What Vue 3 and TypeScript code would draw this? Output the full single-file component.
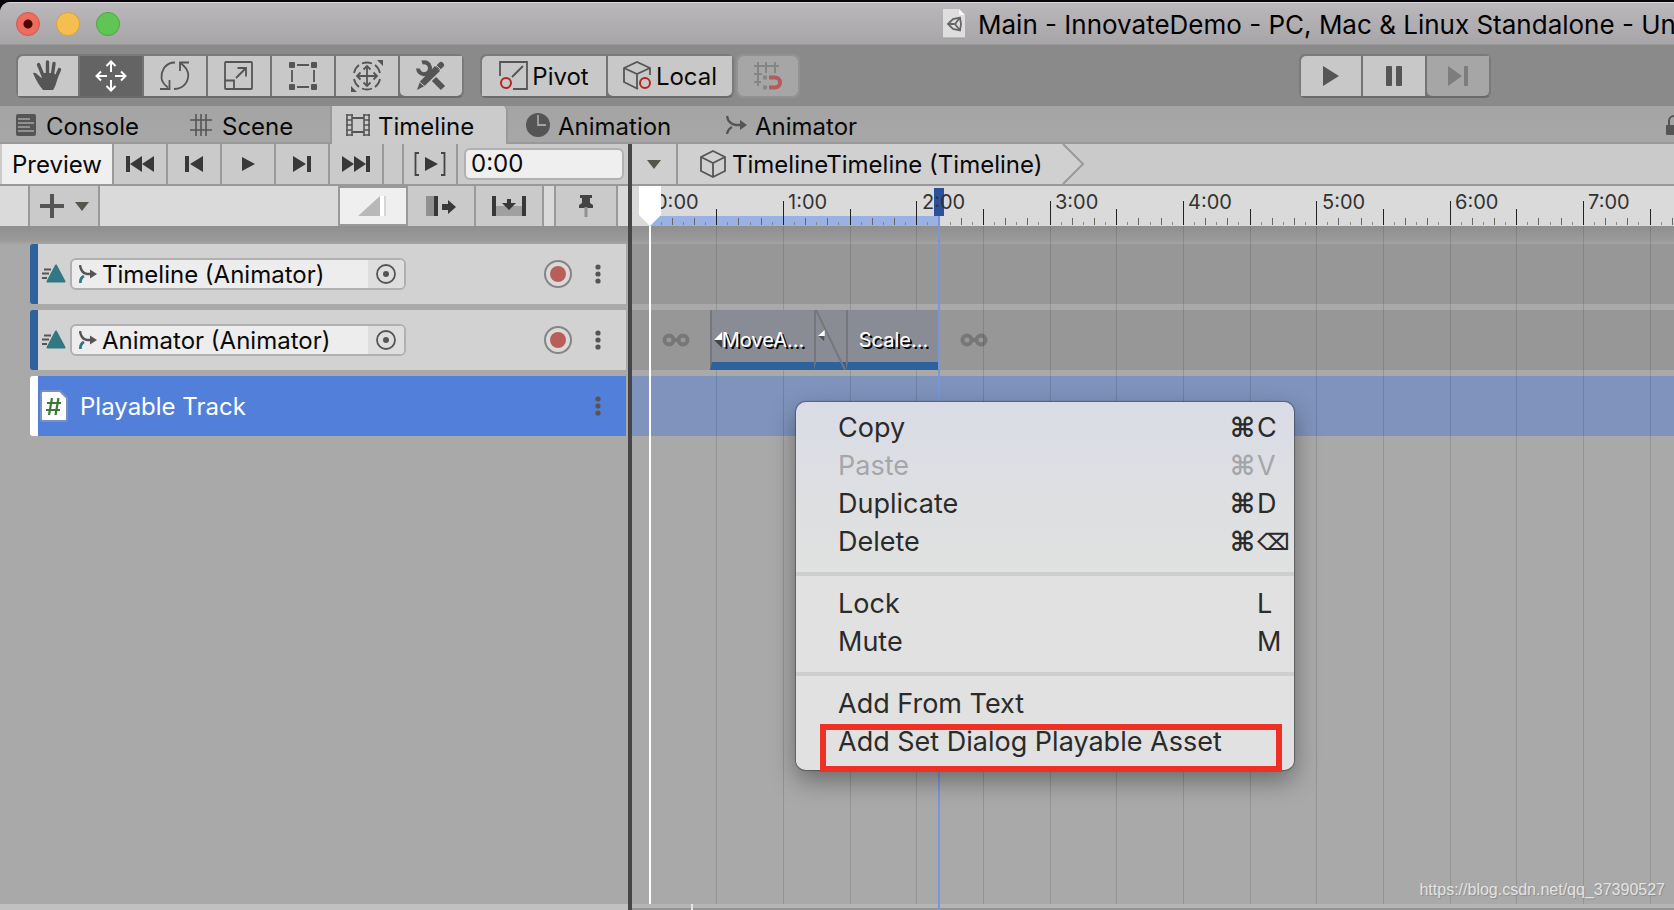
<script setup lang="ts">
import { ref } from 'vue'

interface Tick { x: number; size: 'major' | 'half' | 'medium' | 'small' }
interface MenuItem { label: string; mod?: string; keyName?: string; disabled?: boolean; marked?: boolean }

const ORIGIN = 18
const FRAMES_PER_SECOND = 60
const SECOND_WIDTH = 400 / 3

const frameX = (frame: number): number => Math.round(ORIGIN + (frame * SECOND_WIDTH) / FRAMES_PER_SECOND)

const ticks: Tick[] = []
for (let i = 1; i < 240; i++) {
  const size = i % 12 === 0 ? 'major' : i % 6 === 0 ? 'half' : i % 2 === 0 ? 'medium' : 'small'
  ticks.push({ x: Math.floor(ORIGIN + (i * SECOND_WIDTH) / 12), size })
}
const gridLines = ticks.filter((t) => t.size === 'major' || t.size === 'half')
const seconds = Array.from({ length: 8 }, (_, i) => ({ text: `${i}:00`, x: frameX(i * 60) }))

const END_FRAME = 130
const endX = frameX(END_FRAME)
const clips = [
  { name: 'MoveA...', from: 27, to: 74, arrow: true },
  { name: 'Scale...', from: 88, to: END_FRAME, arrow: false },
]
const clipStyle = (from: number, to: number) => ({
  left: `${frameX(from)}px`,
  width: `${frameX(to) - frameX(from)}px`,
})

const time = ref('0:00')
const bindings = ['Timeline (Animator)', 'Animator (Animator)']

const menu: MenuItem[][] = [
  [
    { label: 'Copy', mod: '⌘', keyName: 'C' },
    { label: 'Paste', mod: '⌘', keyName: 'V', disabled: true },
    { label: 'Duplicate', mod: '⌘', keyName: 'D' },
    { label: 'Delete', mod: '⌘', keyName: '⌫' },
  ],
  [
    { label: 'Lock', keyName: 'L' },
    { label: 'Mute', keyName: 'M' },
  ],
  [{ label: 'Add From Text' }, { label: 'Add Set Dialog Playable Asset', marked: true }],
]
</script>

<template>
  <div class="desktop">
    <div class="window">
      <header class="titlebar">
        <div class="lights">
          <button class="light red" aria-label="Close"></button>
          <button class="light yellow" aria-label="Minimize"></button>
          <button class="light green" aria-label="Zoom"></button>
        </div>
        <div class="title">
          <svg class="doc" width="22" height="30" viewBox="0 0 22 30">
            <path d="M0 0H16L22 6V29H0Z" fill="#dedede" />
            <path d="M16 0V6H22Z" fill="#f6f6f6" />
            <path d="M0 29H22" stroke="#999" />
            <path d="M5 15L10 10L17 8.500L18 15L17 21.500L10 20ZM5 15H12L17 8.500M12 15L17 21.500" fill="none" stroke="#666" stroke-width="1.800" />
          </svg>
          <span>Main - InnovateDemo - PC, Mac &amp; Linux Standalone - Unit</span>
        </div>
      </header>

      <div class="toolbar">
        <div class="group tools">
          <button aria-label="Hand">
            <svg width="30" height="32" viewBox="0 0 30 32">
              <path d="M5.500 4.500L11 18M14.500 2V17M21 3.500L19 18M26.500 9.500L22 20" stroke="#555" stroke-width="3.400" stroke-linecap="round" />
              <path d="M0 13Q2.500 12 5 15L8.500 18L10 13H20L25 16Q23 26 20 30H10Q4 23 0 13Z" fill="#555" />
            </svg>
          </button>
          <button class="on" aria-label="Move">
            <svg width="32" height="32" viewBox="0 0 32 32" fill="none" stroke="#fff" stroke-width="2">
              <path d="M16 12V2M11.500 6L16 1.500L20.500 6M16 20V30M11.500 26L16 30.500L20.500 26M12 16H2M6 11.500L1.500 16L6 20.500M20 16H30M26 11.500L30.500 16L26 20.500" />
            </svg>
          </button>
          <button aria-label="Rotate">
            <svg width="30" height="30" viewBox="0 0 30 30" fill="none" stroke="#555" stroke-width="1.800">
              <path d="M15 1.500Q8 1.500 4 7Q1 12 1.500 17Q2 22 8 26.500M0 28H9.500V19M14 28Q22 28 26 22Q29 17 28 12Q27 7 21 2.500M29 1.500H20V10" />
            </svg>
          </button>
          <button aria-label="Scale">
            <svg width="30" height="30" viewBox="0 0 30 30" fill="none" stroke="#555" stroke-width="1.800">
              <rect x="1" y="1" width="27" height="27" rx="1" />
              <path d="M1 19.500H10V28M12 17L22 7M13.500 7H22V15.500" />
            </svg>
          </button>
          <button aria-label="Rect">
            <svg width="30" height="30" viewBox="0 0 30 30">
              <g fill="#555"><rect x="1" y="1" width="6" height="6" rx="1" /><rect x="23" y="1" width="6" height="6" rx="1" /><rect x="1" y="23" width="6" height="6" rx="1" /><rect x="23" y="23" width="6" height="6" rx="1" /></g>
              <path d="M9 4H21M9 26H21M4 9V21M26 9V21" stroke="#555" stroke-width="1.800" />
            </svg>
          </button>
          <button aria-label="Transform">
            <svg width="34" height="34" viewBox="0 0 34 34" fill="none" stroke="#555" stroke-width="1.800">
              <path d="M12 4.500A13.500 13.500 0 0 1 22 4.500M25 6A13.500 13.500 0 0 1 30 14M30 20A13.500 13.500 0 0 1 25 28M22 29.500A13.500 13.500 0 0 1 12 29.500M9 28A13.500 13.500 0 0 1 4 20M4 14A13.500 13.500 0 0 1 9 6" />
              <path d="M17 7V27M7 17H27M13.500 10.500L17 7L20.500 10.500M13.500 23.500L17 27L20.500 23.500M10.500 13.500L7 17L10.500 20.500M23.500 13.500L27 17L23.500 20.500" />
              <path d="M27 1H33V7ZM1 27V33H7Z" fill="#555" stroke="none" />
            </svg>
          </button>
          <button aria-label="Custom tools">
            <svg width="32" height="32" viewBox="0 0 32 32">
              <path d="M7 2.500A6 6 0 1 1 3 8.500" fill="none" stroke="#555" stroke-width="4" />
              <path d="M11.500 12L14 14.500M19 19L28 28" stroke="#555" stroke-width="6" />
              <path d="M20 6L25 11L9.500 26L2 30L5 21.500Z" fill="#555" />
              <path d="M24.500 6.500L26 5" stroke="#555" stroke-width="6" stroke-linecap="round" />
              <path d="M20.500 4.500L27.500 11.500M4 21.500L10.500 27" stroke="#c8c8c8" stroke-width="1" />
            </svg>
          </button>
        </div>

        <div class="group pair">
          <button>
            <svg width="30" height="30" viewBox="0 0 30 30" fill="none" stroke="#555" stroke-width="1.800">
              <path d="M1 15V1H28V28H14M13 16L24 5" />
              <circle cx="7" cy="22" r="5" stroke="#b5241f" stroke-width="2" />
            </svg>
            <span>Pivot</span>
          </button>
          <button>
            <svg width="30" height="30" viewBox="0 0 30 30" fill="none" stroke="#555" stroke-width="1.800">
              <path d="M15 28L1 21V7L14 1L27 7V14M1 7L14 13L27 7M14 13V28" />
              <circle cx="22" cy="22" r="5" stroke="#b5241f" stroke-width="2" />
            </svg>
            <span>Local</span>
          </button>
        </div>

        <div class="group snap">
          <button disabled aria-label="Grid snapping">
            <svg width="30" height="30" viewBox="0 0 30 30" fill="none" stroke="#858585" stroke-width="2">
              <path d="M5 1V25M13 1V12M22 1V12M1 5H26M1 13H9M1 21H8" />
              <path d="M10 16.500H14M10 26.500H14" stroke-width="4" />
              <path d="M16 16.500H22A5 5 0 0 1 22 26.500H16" stroke="#b55c58" stroke-width="4" />
            </svg>
          </button>
        </div>

        <div class="group play">
          <button aria-label="Play"><svg width="18" height="20" viewBox="0 0 18 20"><path d="M1 0L17 10L1 20Z" fill="#555" /></svg></button>
          <button aria-label="Pause"><svg width="18" height="20" viewBox="0 0 18 20" fill="#555"><rect x="1" width="6" height="20" rx="1" /><rect x="11" width="6" height="20" rx="1" /></svg></button>
          <button disabled aria-label="Step"><svg width="20" height="20" viewBox="0 0 20 20" fill="#7d7d7d"><path d="M0 0L14 10L0 20Z" /><rect x="16" width="4" height="20" rx="1" /></svg></button>
        </div>
      </div>

      <nav class="tabs">
        <button class="tab console">
          <svg width="20" height="22" viewBox="0 0 20 22"><rect width="20" height="22" rx="2" fill="#555" /><path d="M2 5H14M2 9H18M2 13H14M2 17H18" stroke="#a5a5a5" stroke-width="1.600" /></svg>
          <span>Console</span>
        </button>
        <button class="tab scene">
          <svg width="22" height="22" viewBox="0 0 22 22"><path d="M6 0V22M11 0V22M16 0V22M0 6H22M0 16H22" stroke="#555" stroke-width="1.600" /></svg>
          <span>Scene</span>
        </button>
        <button class="tab timeline active">
          <svg width="24" height="22" viewBox="0 0 24 22" fill="none" stroke="#555"><path d="M1 0V22M6 0V22M18 0V22M23 0V22" stroke-width="1.600" /><path d="M0 1H7M0 6H6M0 11H6M0 16H6M0 21H7M17 1H24M18 6H24M18 11H24M18 16H24M17 21H24" stroke-width="1.600" /><path d="M6 4H18M6 18H18" stroke-width="1.800" /></svg>
          <span>Timeline</span>
        </button>
        <button class="tab animation">
          <svg width="24" height="24" viewBox="0 0 24 24"><circle cx="12" cy="12" r="12" fill="#555" /><path d="M12 2V12H20" fill="none" stroke="#a5a5a5" stroke-width="1.800" /></svg>
          <span>Animation</span>
        </button>
        <button class="tab animator">
          <svg width="21" height="20" viewBox="0 0 21 20"><path d="M1 1Q2 9 10 10H15M1 19Q2 14 6 12" fill="none" stroke="#555" stroke-width="2.400" /><path d="M14 5L21 10L14 15Z" fill="#555" /></svg>
          <span>Animator</span>
        </button>
        <svg class="lock" width="16" height="22" viewBox="0 0 16 22"><path d="M3 11V7A5 5 0 0 1 13 7" fill="none" stroke="#555" stroke-width="2" /><rect y="11" width="16" height="10" rx="1" fill="#555" /></svg>
      </nav>

      <main class="panes">
        <section class="left">
          <div class="transport">
            <button class="preview">Preview</button>
            <button aria-label="First frame"><svg width="28" height="16" viewBox="0 0 28 16" fill="#383838"><rect width="4" height="16" /><path d="M16 0V16L4 8ZM28 0V16L16 8Z" /></svg></button>
            <button aria-label="Previous frame"><svg width="18" height="16" viewBox="0 0 18 16" fill="#383838"><rect width="4" height="16" /><path d="M18 0V16L5 8Z" /></svg></button>
            <button aria-label="Play timeline"><svg width="14" height="14" viewBox="0 0 14 14" fill="#383838"><path d="M1 0V14L14 7Z" /></svg></button>
            <button aria-label="Next frame"><svg width="18" height="16" viewBox="0 0 18 16" fill="#383838"><rect x="14" width="4" height="16" /><path d="M0 0V16L13 8Z" /></svg></button>
            <button aria-label="Last frame"><svg width="28" height="16" viewBox="0 0 28 16" fill="#383838"><rect x="24" width="4" height="16" /><path d="M0 0V16L12 8ZM12 0V16L24 8Z" /></svg></button>
            <span class="blank"></span>
            <button aria-label="Play range"><svg width="32" height="24" viewBox="0 0 32 24"><path d="M5 1H1.500V23H5M27 1H30.500V23H27" fill="none" stroke="#444" stroke-width="1.800" /><path d="M11 5V19L24 12Z" fill="#383838" /></svg></button>
            <input v-model="time" class="time" type="text" aria-label="Current time" />
          </div>
          <div class="edit">
            <span class="indent"></span>
            <button class="add" aria-label="Add track">
              <svg width="24" height="24" viewBox="0 0 24 24"><path d="M12 0V24M0 12H24" stroke="#555" stroke-width="4" /></svg>
              <svg width="14" height="9" viewBox="0 0 14 9"><path d="M0 0H14L7 9Z" fill="#555548" /></svg>
            </button>
            <button class="mode current" aria-label="Mix mode"><svg width="30" height="20" viewBox="0 0 30 20"><path d="M0 20L22 0V20Z" fill="#b8b8b8" /><path d="M24 0V20" stroke="#fff" stroke-width="4" /><path d="M27 0V20" stroke="#ccc" stroke-width="1.500" /></svg></button>
            <button class="mode" aria-label="Ripple mode"><svg width="30" height="20" viewBox="0 0 30 20"><rect width="8" height="20" fill="#909090" /><rect x="8" width="4" height="20" fill="#383838" /><path d="M16 8H22V4L30 11L22 18V14H16Z" fill="#383838" /></svg></button>
            <button class="mode" aria-label="Replace mode"><svg width="34" height="20" viewBox="0 0 34 20"><rect x="4" y="10" width="26" height="10" fill="#a0a0a0" /><path d="M0 0H4V20H0ZM30 0H34V20H30ZM15 3H19V7H24L17 14L10 7H15Z" fill="#383838" /></svg></button>
            <span class="blank gap"></span>
            <button class="pin" aria-label="Marker pin"><svg width="14" height="22" viewBox="0 0 14 22"><path d="M1 0H13V3H11V8L14 10V13H0V10L3 8V3H1Z" fill="#444" /><path d="M7 12V22" stroke="#909090" stroke-width="3" /></svg></button>
          </div>

          <div class="tracks">
            <div v-for="name in bindings" :key="name" class="track">
              <svg class="kind" width="25" height="19" viewBox="0 0 25 19"><path d="M3 5.500H10M1 9.500H8M1 14H6" stroke="#555" stroke-width="1.800" /><path d="M15 1.500L23.500 17.500H6.500Z" fill="#317884" stroke="#317884" stroke-width="2" stroke-linejoin="round" /></svg>
              <div class="binding">
                <svg width="18" height="18" viewBox="0 0 18 18"><path d="M1 0Q2 8 8 9H13" fill="none" stroke="#555" stroke-width="2.400" /><path d="M1.500 18Q1 13 5 11" fill="none" stroke="#317884" stroke-width="2.800" /><path d="M11 4.500L18 9L11 13.500Z" fill="#555" /></svg>
                <input type="text" readonly :value="name" :aria-label="name" />
                <button class="picker" aria-label="Select object"><svg width="20" height="20" viewBox="0 0 20 20"><circle cx="10" cy="10" r="9" fill="none" stroke="#555" stroke-width="1.800" /><circle cx="10" cy="10" r="3" fill="#555" /></svg></button>
              </div>
              <button class="record" aria-label="Record"><svg width="28" height="28" viewBox="0 0 28 28"><circle cx="14" cy="14" r="13" fill="#dadada" stroke="#858585" stroke-width="2" /><circle cx="14" cy="14" r="8" fill="#b85f5c" /></svg></button>
              <button class="more" aria-label="Track options"><svg width="6" height="20" viewBox="0 0 6 20" fill="#555"><circle cx="3" cy="3" r="2.600" /><circle cx="3" cy="10" r="2.600" /><circle cx="3" cy="17" r="2.600" /></svg></button>
            </div>
            <div class="track selected">
              <svg class="script" width="28" height="32" viewBox="0 0 28 32"><path d="M3 1H20L27 8V29Q27 31 25 31H3Q1 31 1 29V3Q1 1 3 1Z" fill="#fff" stroke="#7890c4" stroke-width="2" /><path d="M12 8L9 25M18.500 8L15.500 25M7 13H21M6 20H20" stroke="#3b7a35" stroke-width="2.200" /></svg>
              <span class="name">Playable Track</span>
              <button class="more" aria-label="Track options"><svg width="6" height="20" viewBox="0 0 6 20" fill="#555"><circle cx="3" cy="3" r="2.600" /><circle cx="3" cy="10" r="2.600" /><circle cx="3" cy="17" r="2.600" /></svg></button>
            </div>
          </div>
          <div class="foot"></div>
        </section>

        <section class="right">
          <div class="crumbs">
            <button class="drop" aria-label="Choose timeline"><svg width="14" height="9" viewBox="0 0 14 9"><path d="M0 0H14L7 9Z" fill="#555548" /></svg></button>
            <button class="crumb">
              <svg width="26" height="28" viewBox="0 0 26 28" fill="none" stroke="#555" stroke-width="1.800"><path d="M13 1L25 7V21L13 27L1 21V7ZM1 7L13 13L25 7M13 13V27" /></svg>
              <span>TimelineTimeline (Timeline)</span>
            </button>
            <svg class="chevron" width="24" height="40" viewBox="0 0 24 40"><path d="M0 0H2L22 20L2 40H0Z" fill="#d0d0d0" /><path d="M2 0L22 20L2 40" fill="none" stroke="#999" stroke-width="2" /></svg>
          </div>
          <div class="ruler">
            <div class="range" :style="{ left: `${ORIGIN}px`, width: `${endX - ORIGIN}px` }"></div>
            <div v-for="t in ticks" :key="t.x" class="tick" :class="t.size" :style="{ left: `${t.x}px` }"></div>
            <div class="end-mark" :style="{ left: `${endX - 5}px` }"></div>
            <span v-for="s in seconds" :key="s.text" class="second" :style="{ left: `${s.x}px` }">{{ s.text }}</span>
            <svg class="head" width="22" height="40" viewBox="0 0 22 40"><path d="M0 0H22V29L11 40L0 29Z" fill="#fff" /></svg>
          </div>
          <div class="canvas">
            <div class="lane"></div>
            <div class="lane">
              <svg class="infinity before" width="28" height="14" viewBox="0 0 28 14" fill="none" stroke="#777" stroke-width="4"><circle cx="7" cy="7" r="4.500" /><circle cx="21" cy="7" r="4.500" /><path d="M11 7H17" /></svg>
              <div v-for="c in clips" :key="c.name" class="clip" :style="clipStyle(c.from, c.to)">
                <svg v-if="c.arrow" class="ease" width="8" height="16" viewBox="0 0 8 16"><path d="M8 0V8H0Z" fill="#fff" /><path d="M0 8H8V16Z" fill="#444" /></svg>
                <span>{{ c.name }}</span>
              </div>
              <div class="clip blend" :style="clipStyle(74, 88)">
                <svg width="100%" height="60" viewBox="0 0 31 60" preserveAspectRatio="none"><path d="M0 0L30 60" stroke="#74777c" stroke-width="2" /><path d="M9 20V32L2 26Z" fill="#fff" /><path d="M2 26H9V32Z" fill="#555" /></svg>
              </div>
              <svg class="infinity after" width="28" height="14" viewBox="0 0 28 14" fill="none" stroke="#777" stroke-width="4"><circle cx="7" cy="7" r="4.500" /><circle cx="21" cy="7" r="4.500" /><path d="M11 7H17" /></svg>
            </div>
            <div class="lane selected"></div>
            <div v-for="g in gridLines" :key="g.x" class="grid-line" :style="{ left: `${g.x}px` }"></div>
            <div class="playhead" :style="{ left: `${ORIGIN - 1}px` }"></div>
          </div>
          <div class="scroll"><span class="handle"></span></div>
          <div class="end-line" :style="{ left: `${endX - 1}px` }"></div>

          <div class="menu" role="menu">
            <div v-for="(items, i) in menu" :key="i" class="menu-group">
              <button v-for="item in items" :key="item.label" class="item" :class="{ marked: item.marked }" role="menuitem" :disabled="item.disabled">
                <span>{{ item.label }}</span>
                <span class="mod">{{ item.mod }}</span>
                <span :class="{ erase: item.keyName === '⌫' }">{{ item.keyName }}</span>
              </button>
            </div>
          </div>
          <span class="watermark">https://blog.csdn.net/qq_37390527</span>
        </section>
      </main>
    </div>
  </div>
</template>

<style>
body { margin: 0; background: #08040c; }
</style>

<style scoped>
*, *::after { box-sizing: border-box; }
.desktop { min-height: 100vh; padding-top: 2px; background: #08040c; font: 24px/30px Inter, "Liberation Sans", sans-serif; color: #090909; display: flex; overflow: hidden; }
.window { flex: 1; min-width: 0; display: flex; flex-direction: column; border-radius: 10px 0 0 0; overflow: hidden; background: #a9a9a9; }
button, input { font: inherit; color: inherit; margin: 0; padding: 0; border: 0; border-radius: 0; background: none; min-width: 0; }
button { display: flex; align-items: center; justify-content: center; white-space: nowrap; }
svg { display: block; flex: none; }

.titlebar { height: 43px; flex: none; display: flex; align-items: center; padding-left: 16px; background: linear-gradient(#bbb8bb, #a8a5a8); border-top: 1px solid #dad8da; border-bottom: 1px solid #999; overflow: hidden; }
.lights { display: flex; gap: 16px; flex: 1 0 auto; }
.light { width: 24px; height: 24px; border-radius: 50%; border: 1px solid; }
.red { background: radial-gradient(circle, #490703 0 4px, #ee6b60 5px); border-color: #d8534a; }
.yellow { background: #f5bf4f; border-color: #d9a13c; }
.green { background: #61c555; border-color: #4aa73c; }
.title { display: flex; align-items: center; gap: 13px; width: 731px; flex: none; white-space: nowrap; font-size: 26px; color: #000; }
.title span { padding-top: 2px; }

.toolbar { height: 61px; flex: none; display: flex; align-items: center; padding: 0 183px 0 16px; background: #8a8a8a; }
.group { display: flex; height: 44px; background: #747474; border: 2px solid #7a7a7a; border-bottom-color: #6a6a6a; border-radius: 6px; gap: 2px; }
.group button { width: 62px; background: #c8c8c8; }
.group button:first-child { width: 60px; border-radius: 5px 0 0 0; }
.group button:last-child { border-radius: 0 0 5px 5px; }
.group .on { background: #646464; }
.pair { margin-left: 16px; }
.pair button, .pair button:first-child { width: 124px; gap: 3px; }
.pair span { padding-top: 2px; }
.snap { margin-left: 2px; }
.snap, .snap button:first-child { border-radius: 6px; }
.group button:disabled { background: #a6a6a6; }
.snap.group { border-color: #929292; background: #929292; }
.play { margin-left: auto; }

.tabs { height: 38px; flex: none; display: flex; background: linear-gradient(#a4a4a4, #a7a7a7); border-bottom: 2px solid #999; }
.tab { justify-content: flex-start; height: 36px; padding-top: 2px; flex: none; }
.tab span { padding-top: 3px; }
.console { width: 173px; padding-left: 16px; gap: 10px; }
.scene { width: 157px; padding-left: 17px; gap: 10px; }
.timeline { width: 178px; padding-left: 14px; gap: 8px; }
.active { background: #cbcbcb; border-left: 2px solid #999; border-right: 2px solid #999; border-radius: 0 5px 0 0; height: 38px; padding-bottom: 2px; }
.animation { width: 197px; padding-left: 18px; gap: 8px; }
.animator { width: 184px; padding-left: 21px; gap: 8px; }
.lock { margin: 8px -8px 0 auto; }

.panes { flex: 1; display: grid; grid-template-columns: 632px minmax(0, 1fr); min-height: 0; }
.left { border-right: 4px solid #464646; display: flex; flex-direction: column; }
.transport { height: 42px; flex: none; display: flex; padding-left: 2px; background: #cacaca; border-bottom: 2px solid #999; }
.transport button { width: 54px; border-right: 2px solid #999; }
.transport .preview { width: 112px; background: #efefef; padding-top: 1px; }
.blank { width: 20px; border-right: 2px solid #999; }
.transport .time { flex: 1; margin: 4px 4px 4px 6px; padding: 0 5px; background: #efefef; border: 2px solid #b0b0b0; border-radius: 6px; }
.edit { height: 40px; flex: none; display: flex; background: #dadada; }
.edit button { background: #cacaca; border-right: 2px solid #999; }
.indent { width: 30px; border-right: 2px solid #999; }
.edit .add { width: 70px; gap: 11px; margin-right: auto; }
.edit .mode { width: 68px; }
.edit .current { width: 70px; background: #efefef; border: 2px solid #999; }
.edit .gap { width: 12px; }
.edit .pin { width: 62px; margin-right: 10px; }

.tracks, .canvas { flex: 1; padding-top: 18px; display: flex; flex-direction: column; gap: 6px; background: linear-gradient(#8f8f8f, #9b9b9b 15px, #a9a9a9 19px); }
.tracks { padding-left: 30px; padding-right: 2px; }
.track { height: 60px; display: flex; align-items: center; background: #d2d2d2; border-left: 8px solid #2d629d; padding-right: 23px; border-radius: 3px 0 0 3px; }
.kind { margin: 0 4px 2px 3px; }
.binding { width: 336px; height: 32px; display: flex; align-items: center; padding-left: 7px; border: 2px solid #b0b0b0; border-radius: 6px; background: #ededed; overflow: hidden; }
.binding input { flex: 1; height: 30px; padding: 2px 0 0 5px; outline: none; }
.picker { width: 36px; height: 28px; background: #dedede; }
.record { margin-left: auto; }
.more { margin-left: 21px; width: 10px; }
.track.selected { background: #527fd9; border-left-color: #fff; color: #fff; }
.script { margin: 0 12px 0 2px; }
.name { padding-top: 2px; }
.selected .more { margin-left: auto; }
.foot { height: 6px; flex: none; background: #c1c1c1; }

.right { position: relative; display: flex; flex-direction: column; overflow: hidden; }
.crumbs { height: 42px; flex: none; display: flex; background: #cacaca; border-bottom: 2px solid #999; }
.drop { width: 46px; background: #cfcfcf; border-right: 2px solid #999; }
.crumb { padding-left: 22px; padding-right: 19px; gap: 6px; background: #d0d0d0; }
.crumb span { padding-top: 2px; }
.ruler { position: relative; height: 40px; flex: none; background: #dadada; overflow: hidden; }
.range { position: absolute; top: 30px; bottom: 0; background: #9ab1e3; }
.tick { position: absolute; bottom: 1px; width: 1px; background: #222; }
.major { height: 24px; }
.half { height: 16px; }
.medium { height: 7px; background: #666; }
.small { height: 3px; background: #888; }
.second { position: absolute; top: 4px; padding-left: 5px; font-size: 20px; line-height: 24px; color: #333; }
.head { position: absolute; left: 7px; top: 0; }
.end-mark { position: absolute; top: 2px; width: 10px; height: 28px; background: #2d509a; }
.canvas { position: relative; }
.lane { position: relative; height: 60px; flex: none; background: #979797; }
.lane.selected { background: #7f93bc; }
.infinity { position: absolute; top: 23px; }
.before { left: 30px; }
.after { left: 328px; }
.clip { position: absolute; z-index: 1; top: 0; height: 60px; display: flex; align-items: center; justify-content: center; background: #898c94; border-left: 2px solid #74777c; border-bottom: 8px solid #2d629d; font-size: 20px; color: #fff; text-shadow: 2px 2px 0 #000; padding-top: 8px; white-space: nowrap; }
.ease { position: absolute; left: 2px; top: 22px; }
.clip.blend { padding: 0; align-items: flex-start; }
.grid-line { position: absolute; top: 0; bottom: 0; width: 1px; background: rgba(0, 0, 0, 0.12); }
.playhead { position: absolute; top: 0; bottom: 0; width: 2px; background: #fff; }
.end-line { position: absolute; top: 72px; bottom: 0; width: 2px; background: #7796dc; z-index: 2; }
.scroll { height: 6px; flex: none; background: #b5b5b5; border-bottom: 2px solid #949494; padding-left: 59px; }
.handle { display: block; width: 2px; height: 6px; background: #e6e6e6; }

.menu { position: absolute; z-index: 3; left: 164px; top: 258px; width: 498px; padding-bottom: 9px; border-radius: 10px; background: linear-gradient(#d9dce6, #dedfe2 90px, #e0e1e0 180px); box-shadow: 0 0 1px 1px rgba(0, 0, 0, 0.3), 0 10px 26px rgba(0, 0, 0, 0.38); font-size: 27px; line-height: 38px; color: #2b2b2b; }
.menu-group { padding: 9px 0 11px; border-bottom: 4px solid #cdcecd; }
.menu-group:first-child { padding-top: 7px; }
.menu-group:last-child { border: 0; padding-bottom: 0; }
.item { width: 100%; height: 38px; padding-left: 42px; display: grid; grid-template-columns: 1fr 27px 37px; text-align: left; }
.item:disabled { color: #a5a6aa; }
.mod { font-family: "DejaVu Sans", sans-serif; font-weight: 700; }
.erase { font-family: "DejaVu Sans", sans-serif; font-size: 23px; font-weight: 700; }
.marked { position: relative; }
.marked::after { content: ""; position: absolute; left: 24px; right: 12px; top: 1px; height: 48px; border: 6px solid #ee3124; }
.watermark { position: absolute; z-index: 3; right: 9px; bottom: 10px; font: 16px/20px "Liberation Sans", Arial, sans-serif; color: #e3e3e3; text-shadow: 1px 1px 1px #8b8b8b; }
</style>
